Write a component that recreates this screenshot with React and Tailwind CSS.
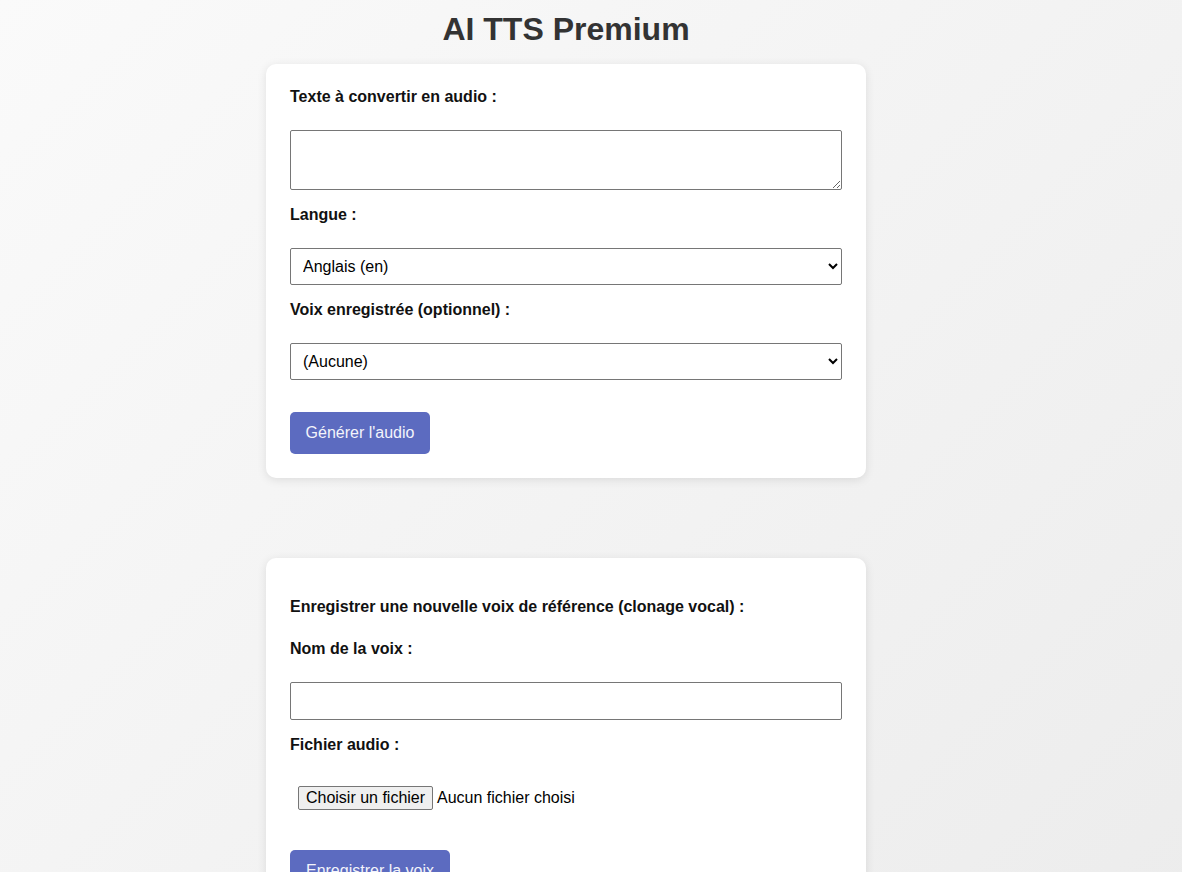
import React from "react";

const font = { fontFamily: '"Liberation Sans", Arial, sans-serif' };

function Label({ children, className = "" }) {
  return (
    <label
      className={`block text-[16px] leading-[18px] font-bold text-[#111] mb-[24px] ${className}`}
    >
      {children}
    </label>
  );
}

function PrimaryButton({ children, w }) {
  return (
    <button
      type="button"
      className={`h-[42px] rounded-[5px] bg-[#5c6bc0] text-[#f3f4fb] text-[16px] leading-[18px] whitespace-nowrap text-center ${w}`}
    >
      {children}
    </button>
  );
}

export default function App() {
  return (
    <div
      className="min-h-screen w-full bg-linear-135 from-[#fafafa] to-[#ececec] pt-[11px] pb-10"
      style={font}
    >
      <div className="w-[1132px]">
        <h1 className="text-center text-[32px] leading-[37px] font-bold text-[#333] mb-[16px]">
          AI TTS Premium
        </h1>

        <div className="mx-auto w-[600px] bg-white rounded-[10px] shadow-[0_2px_10px_rgba(0,0,0,0.1)] px-6 pt-[24px] pb-6">
          <Label>Texte à convertir en audio :</Label>
          <textarea className="block w-full h-[60px] border border-[#767676] rounded-[2px] bg-white p-2 text-[16px]" />

          <Label className="mt-[16px]">Langue :</Label>
          <select
            defaultValue="en"
            className="block w-full h-[37px] border border-[#767676] rounded-[2px] bg-white px-2 text-[16px] text-black"
          >
            <option value="en">Anglais (en)</option>
            <option value="fr">Français (fr)</option>
          </select>

          <Label className="mt-[16px]">Voix enregistrée (optionnel) :</Label>
          <select
            defaultValue=""
            className="block w-full h-[37px] border border-[#767676] rounded-[2px] bg-white px-2 text-[16px] text-black mb-[32px]"
          >
            <option value="">(Aucune)</option>
          </select>

          <PrimaryButton w="w-[140px]">Générer l'audio</PrimaryButton>
        </div>

        <div className="mx-auto mt-[80px] w-[600px] bg-white rounded-[10px] shadow-[0_2px_10px_rgba(0,0,0,0.1)] px-6 pt-[40px] pb-6">
          <Label>Enregistrer une nouvelle voix de référence (clonage vocal) :</Label>
          <Label>Nom de la voix :</Label>
          <input
            type="text"
            className="block w-full h-[38px] mt-[1px] border border-[#767676] rounded-[2px] bg-white px-2 text-[16px]"
          />

          <Label className="mt-[16px]">Fichier audio :</Label>
          <div className="flex items-center h-[40px] px-2 mb-[32px] text-[16px] text-black">
            <button
              type="button"
              className="h-[24px] w-[135px] px-[6px] border border-[#767676] rounded-[2px] bg-[#efefef] text-[16px] leading-[18px] text-black mr-[4px] whitespace-nowrap"
            >
              Choisir un fichier
            </button>
            <span className="leading-[18px]">Aucun fichier choisi</span>
          </div>

          <PrimaryButton w="w-[160px]">Enregistrer la voix</PrimaryButton>
        </div>
      </div>
    </div>
  );
}
